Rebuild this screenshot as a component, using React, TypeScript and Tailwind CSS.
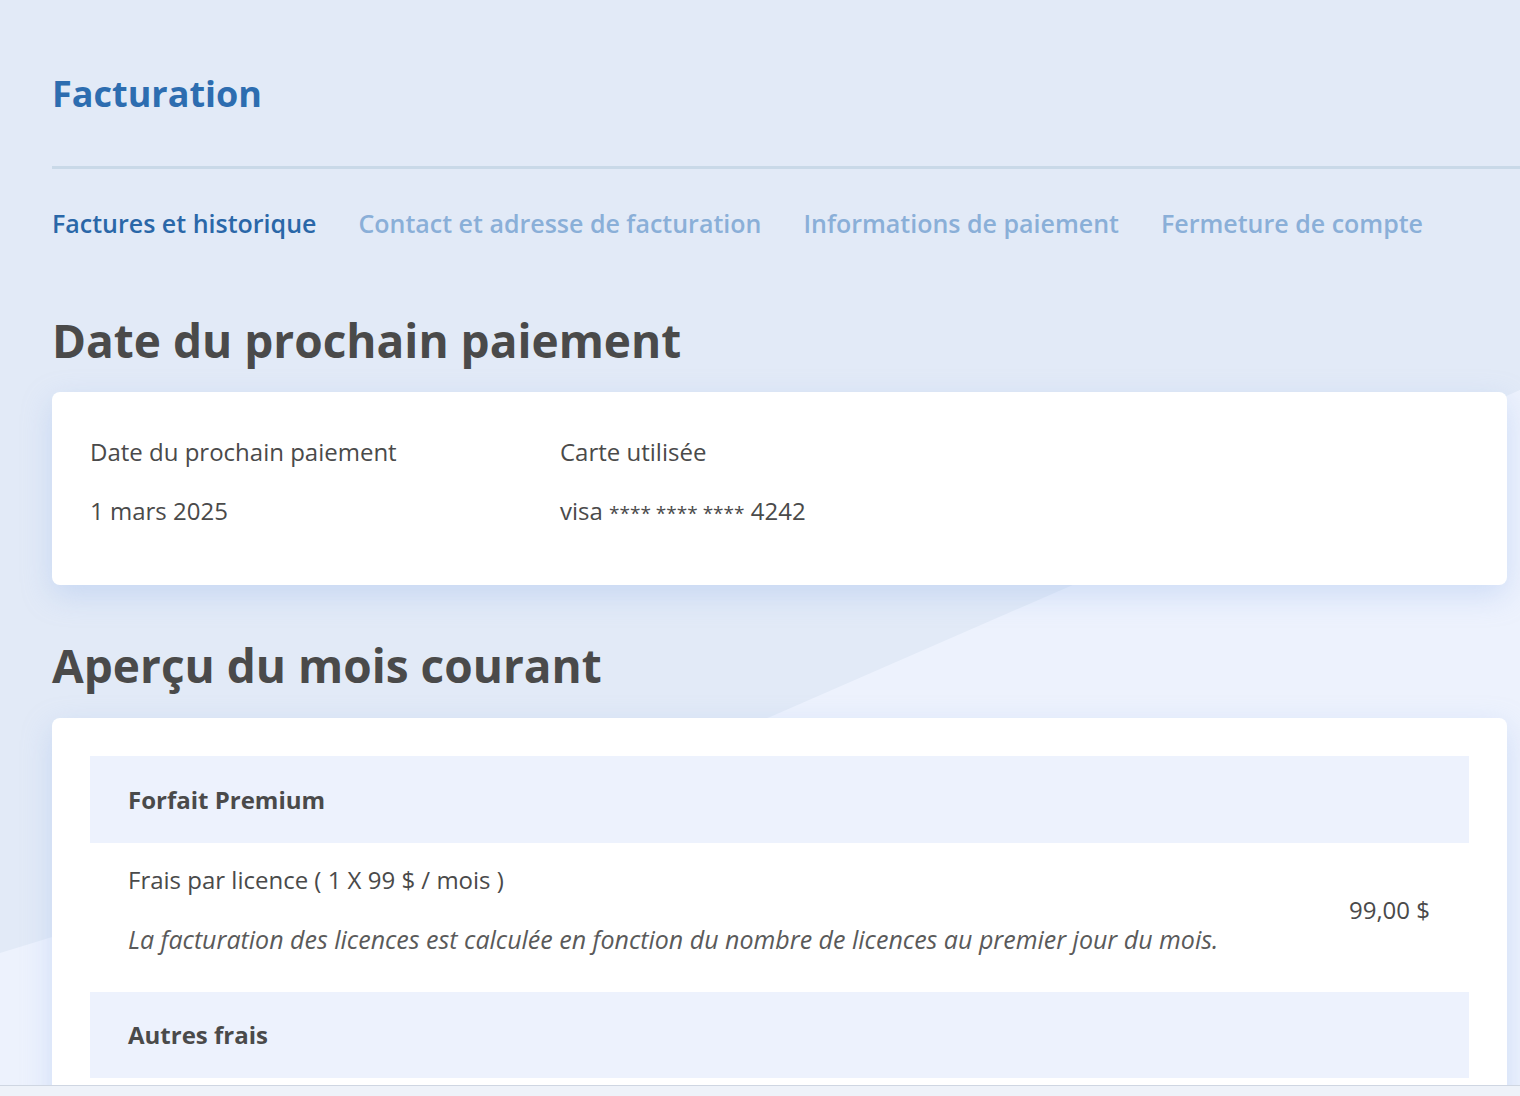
import React from "react";

const tabs = [
  { label: "Factures et historique", active: true },
  { label: "Contact et adresse de facturation", active: false },
  { label: "Informations de paiement", active: false },
  { label: "Fermeture de compte", active: false },
];

export default function App() {
  return (
    <div className="relative min-h-screen overflow-hidden bg-[#e2eaf7] font-['Open_Sans',sans-serif] text-[#4a4a4a]">
      {/* background shapes */}
      <svg
        className="absolute left-0 top-0 h-[1096px] w-[1520px]"
        viewBox="0 0 1520 1096"
      >
        <polygon points="1520,390 770,717 0,953 0,1096 1520,1096" fill="#edf2fd" />
      </svg>

      <div className="relative pl-[52px] pt-[70px]">
        <h1 className="text-[36px] font-bold leading-[48px] text-[#2d6db0]">Facturation</h1>

        <div className="mt-[48px] border-b-[3px] border-[#c9d9e8]" />

        {/* Tabs */}
        <nav className="mt-[38px] flex gap-[42px]">
          {tabs.map((t) => (
            <span
              key={t.label}
              className={`text-[25px] font-semibold leading-[32px] ${
                t.active ? "text-[#2a67a8]" : "text-[#8aafd8]"
              }`}
            >
              {t.label}
            </span>
          ))}
        </nav>

        {/* Next payment */}
        <h2 className="mt-[73px] text-[46px] font-bold leading-[56px] text-[#4a4a4a]">
          Date du prochain paiement
        </h2>
        <div className="mr-[13px] mt-[24px] rounded-lg bg-white pb-[59px] pl-[38px] pt-[45px] shadow-[0_10px_30px_rgba(150,180,235,0.35)]">
          <div className="grid grid-cols-[470px_1fr] text-[24px] leading-[30px]">
            <span>Date du prochain paiement</span>
            <span>Carte utilisée</span>
            <span className="mt-[29px]">1 mars 2025</span>
            <span className="mt-[29px] h-[30px]">
              visa <span className="text-[19px] leading-none">**** **** ****</span> 4242
            </span>
          </div>
        </div>

        {/* Current month */}
        <h2 className="mt-[52px] text-[46px] font-bold leading-[56px] text-[#4a4a4a]">
          Aperçu du mois courant
        </h2>
        <div className="mr-[13px] mt-[25px] rounded-lg bg-white px-[38px] pt-[38px] pb-[38px] shadow-[0_10px_30px_rgba(150,180,235,0.35)]">
          <div className="flex h-[87px] items-center bg-[#edf2fd] px-[38px]">
            <span className="text-[24px] font-bold">Forfait Premium</span>
          </div>
          <div className="flex items-center justify-between pb-[38px] pl-[38px] pr-[39px] pt-[22px]">
            <div className="flex flex-col leading-[30px]">
              <span className="text-[24px]">Frais par licence ( 1 X 99 $ / mois )</span>
              <span className="mt-[29px] text-[25px] italic text-[#5a5a5a]">
                La facturation des licences est calculée en fonction du nombre de licences au premier jour du mois.
              </span>
            </div>
            <span className="text-[24px] leading-[30px]">99,00 $</span>
          </div>
          <div className="flex h-[86px] items-center bg-[#edf2fd] px-[38px]">
            <span className="text-[24px] font-bold">Autres frais</span>
          </div>
          <div className="h-[120px]" />
        </div>
      </div>

      {/* bottom bar */}
      <div className="fixed bottom-0 left-0 right-0 h-[11px] border-t border-[#cfd6e2] bg-[#eef2f9]" />
    </div>
  );
}
